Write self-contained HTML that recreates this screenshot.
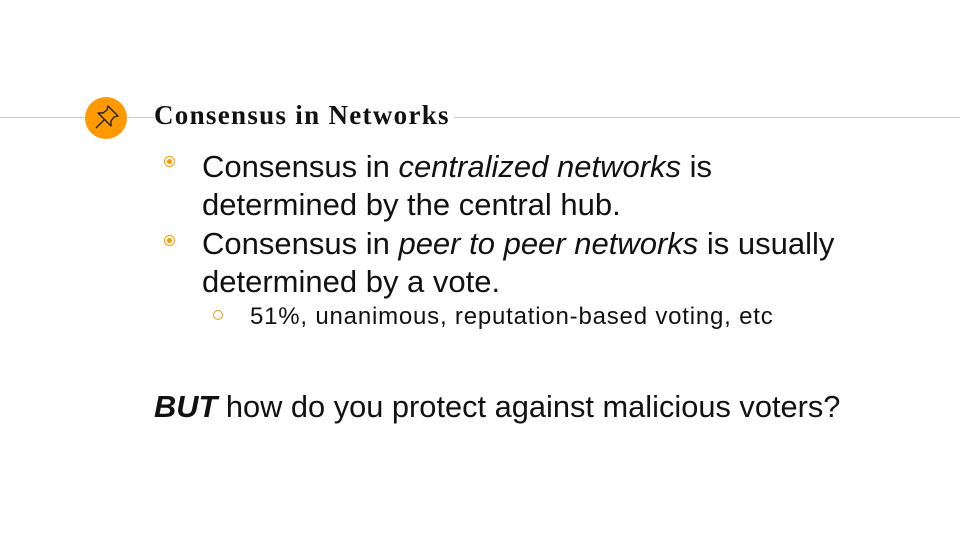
<!DOCTYPE html>
<html><head><style>
body{margin:0;width:960px;height:540px;background:#fff;position:relative;overflow:hidden;font-family:"Liberation Sans",sans-serif;color:#111}
.line{position:absolute;left:0;right:0;top:117px;height:1px;background:#ccc}
.circ{position:absolute;left:85px;top:97px;width:42px;height:42px;border-radius:50%;background:#ff9900}
.title{position:absolute;left:154px;top:100px;font-family:"Liberation Serif",serif;font-weight:bold;font-size:27px;letter-spacing:1.3px;background:#fff;padding-right:4px}
.t{position:absolute;font-size:31px;white-space:nowrap;font-weight:normal}
.b{position:absolute;width:9px;height:9px;border-radius:50%;border:1.5px solid #ff9900;background:#fff}
.b::after{content:"";position:absolute;left:2px;top:2px;width:5px;height:5px;border-radius:50%;background:#ff9900}
</style></head><body>
<div class="line"></div>
<div class="circ"><svg width="42" height="42" viewBox="0 0 42 42" fill="none" stroke="#222" stroke-width="1.4" stroke-linejoin="round"><path d="M23 9 L33 19 L29 20 L26 24 L26 29 L13 16 L18 16 L22 13 Z"/><path d="M19 23 L11 31"/></svg></div>
<div class="title">Consensus in Networks</div>
<div class="b" style="left:164px;top:156px"></div>
<div class="t" style="left:202px;top:149px">Consensus in <i>centralized networks</i> is</div>
<div class="t" style="left:202px;top:187px">determined by the central hub.</div>
<div class="b" style="left:164px;top:235px"></div>
<div class="t" style="left:202px;top:226px">Consensus in <i>peer to peer networks</i> is usually</div>
<div class="t" style="left:202px;top:264px">determined by a vote.</div>
<div style="position:absolute;left:213px;top:310px;width:8px;height:8px;border-radius:50%;border:1.3px solid #ff9900"></div>
<div class="t" style="left:250px;top:303px;font-size:24px;letter-spacing:0.8px">51%, unanimous, reputation-based voting, etc</div>
<div class="t" style="left:154px;top:389px;font-size:30.8px"><i style="font-weight:bold">BUT</i> how do you protect against malicious voters?</div>
</body></html>
